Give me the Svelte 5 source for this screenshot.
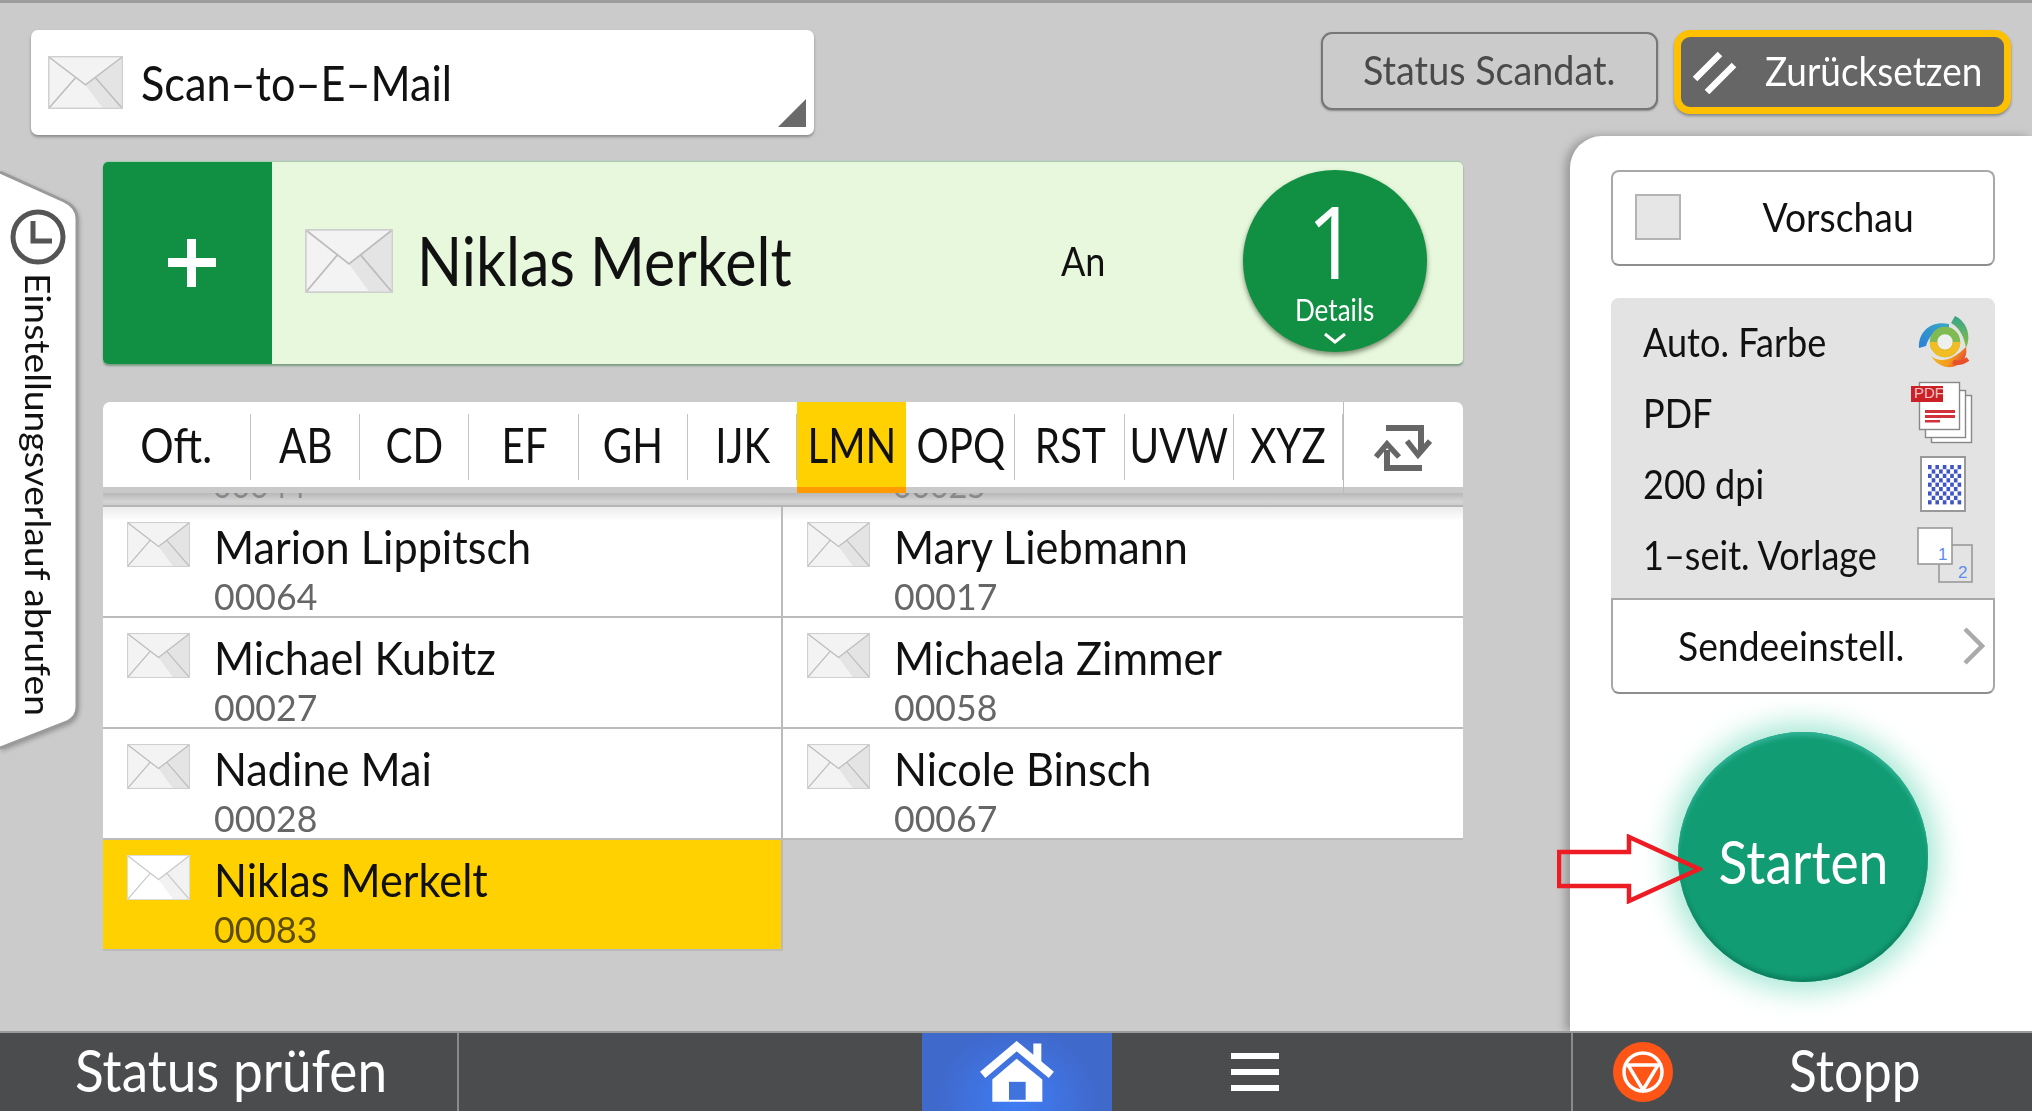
<script>
  const tabs = ["AB", "CD", "EF", "GH", "IJK", "LMN", "OPQ", "RST", "UVW", "XYZ"];
  const contacts = [
    { name: "Marion Lippitsch", id: "00064" },
    { name: "Mary Liebmann", id: "00017" },
    { name: "Michael Kubitz", id: "00027" },
    { name: "Michaela Zimmer", id: "00058" },
    { name: "Nadine Mai", id: "00028" },
    { name: "Nicole Binsch", id: "00067" },
    { name: "Niklas Merkelt", id: "00083", selected: true }
  ];
  const dots = [];
  for (let y = 0; y < 9; y++) {
    for (let x = 0; x < 9; x++) {
      if ((x + y) % 2 === 0) dots.push({ x: 8 + x * 3.7, y: 9 + y * 4.4 });
    }
  }
</script>

{#snippet envelope(cls)}
  <svg class={cls} viewBox="0 0 60 44" preserveAspectRatio="none">
    <rect x="0.5" y="0.5" width="59" height="43" fill="#f3f3f3" stroke="#cfcfcf" />
    <polygon points="30,24 44,43.5 59.5,43.5 59.5,1 " fill="#e4e4e4" />
    <path d="M1 1 L30 24 L59 1 M1 43 L22 18 M59 43 L38 18" fill="none" stroke="#bdbdbd" stroke-width="1.2" />
    <rect x="0.5" y="0.5" width="59" height="43" fill="none" stroke="#cfcfcf" />
  </svg>
{/snippet}

<div class="screen">
  <div class="top">
    <div class="selector">
      {@render envelope("envSelector")}
      <span class="cond selectorText">Scan–to–E–Mail</span>
      <div class="corner"></div>
    </div>
    <div class="topButtons">
      <button class="statusBtn"><span class="condC">Status Scandat.</span></button>
      <button class="resetBtn">
        <svg class="resetIcon" viewBox="0 0 44 44">
          <path d="M2 29 L27 4 M14 42 L41 15" stroke="#fff" stroke-width="6.5" fill="none" />
        </svg>
        <span class="cond resetText">Zurücksetzen</span>
      </button>
    </div>
  </div>

  <div class="main">
    <div class="left">
      <div class="destCard">
        <div class="plus"><div class="plusH"></div><div class="plusV"></div></div>
        {@render envelope("envLarge")}
        <span class="cond destName">Niklas Merkelt</span>
        <span class="cond destAn">An</span>
        <div class="count">
          <span class="countNum">1</span>
          <span class="condC countLabel">Details</span>
          <svg class="countChevron" viewBox="0 0 24 13">
            <path d="M2 2 L12 10 L22 2" fill="none" stroke="#fff" stroke-width="3" />
          </svg>
        </div>
      </div>

      <div class="tabs">
        <div class="tab first"><span class="condC">Oft.</span></div>
        {#each tabs as t}
          <div class="tab" class:active={t === "LMN"}><span class="condC">{t}</span></div>
        {/each}
        <div class="tab swap">
          <svg class="swapIcon" viewBox="0 0 58 48">
            <path d="M12 4 H47 V28" fill="none" stroke="#666" stroke-width="6" />
            <path d="M33 17 L44 31 L56 17" fill="none" stroke="#666" stroke-width="5.5" />
            <path d="M13 26 V44 H48" fill="none" stroke="#666" stroke-width="6" />
            <path d="M2 33 L13 20 L25 33" fill="none" stroke="#666" stroke-width="5.5" />
          </svg>
        </div>
      </div>

      <div class="peek">
        <span class="peekNum">00044</span>
        <span class="peekNum">00025</span>
      </div>

      <div class="list">
        {#each contacts as c}
          <div class="row" class:selected={c.selected}>
            {@render envelope("envRow")}
            <div class="rowText">
              <span class="cond rowName">{c.name}</span>
              <span class="cond rowId">{c.id}</span>
            </div>
          </div>
        {/each}
      </div>
    </div>

    <div class="panel">
      <div class="preview">
        <div class="check"></div>
        <span class="condC previewText">Vorschau</span>
      </div>

      <div class="info">
        <div class="infoRow">
          <span class="cond">Auto. Farbe</span>
          <svg class="swirl" viewBox="0 0 52 53">
            <defs>
              <linearGradient id="swirlTop" x1="0" y1="1" x2="1" y2="0">
                <stop offset="0" stop-color="#2c7fd6" />
                <stop offset="1" stop-color="#39a9c4" />
              </linearGradient>
              <linearGradient id="swirlSide" x1="0" y1="0" x2="0" y2="1">
                <stop offset="0" stop-color="#35a48e" />
                <stop offset="1" stop-color="#8dbe3f" />
              </linearGradient>
              <linearGradient id="swirlLow" x1="0" y1="0" x2="1" y2="0.4">
                <stop offset="0" stop-color="#f3c321" />
                <stop offset="0.7" stop-color="#f29a1f" />
                <stop offset="1" stop-color="#e8502c" />
              </linearGradient>
            </defs>
            <path d="M1 33 C0 16 14 5 31 9 L31 14 C20 12 11 20 8 31 Z" fill="url(#swirlTop)" />
            <path d="M37 1 C48 6 54 20 48 33 C46 22 42 13 33 8 Z" fill="url(#swirlSide)" />
            <circle cx="27" cy="27" r="11.5" fill="#eef0ee" stroke="#7fbb52" stroke-width="7.5" />
            <path d="M15.5 27 A11.5 11.5 0 0 0 38.5 27" fill="none" stroke="#f1bd22" stroke-width="7.5" />
            <path d="M13 41 C22 48 34 46 48 32 C50 42 44 50 34 52 C26 53 18 49 13 41 Z" fill="url(#swirlLow)" />
            <path d="M35 47 C41 49 46 47 50 44" fill="none" stroke="#e8502c" stroke-width="4.5" />
          </svg>
        </div>
        <div class="infoRow">
          <span class="cond">PDF</span>
          <svg class="pdf" viewBox="0 0 62 63">
            <rect x="20.5" y="14.5" width="40" height="47" fill="#fff" stroke="#888" stroke-width="1.4" />
            <rect x="14.5" y="9.5" width="40" height="47" fill="#fff" stroke="#888" stroke-width="1.4" />
            <rect x="8.5" y="1.5" width="40" height="47" fill="#fff" stroke="#888" stroke-width="1.4" />
            <rect x="0" y="5" width="32" height="16" fill="#cb2026" />
            <text x="3" y="17" class="pdfLabel">PDF</text>
            <rect x="14" y="29" width="30" height="3" fill="#d2333a" />
            <rect x="14" y="34" width="30" height="3" fill="#d2333a" />
            <rect x="14" y="39" width="15" height="2.5" fill="#d2333a" />
          </svg>
        </div>
        <div class="infoRow">
          <span class="cond">200 dpi</span>
          <svg class="dpi" viewBox="0 0 46 56">
            <rect x="1" y="1" width="44" height="54" fill="#fff" stroke="#999" stroke-width="2" />
            {#each dots as d}
              <rect x={d.x} y={d.y} width="3.6" height="4.2" fill="#3f55c4" />
            {/each}
          </svg>
        </div>
        <div class="infoRow">
          <span class="cond">1–seit. Vorlage</span>
          <svg class="sides" viewBox="0 0 56 56">
            <rect x="22" y="18" width="33" height="37" fill="#e4e4e4" stroke="#999" stroke-width="1.6" />
            <rect x="1" y="1" width="34" height="36" fill="#fff" stroke="#999" stroke-width="1.6" />
            <text x="21" y="33" class="sideNum">1</text>
            <text x="41" y="51" class="sideNum">2</text>
          </svg>
        </div>
      </div>

      <div class="send">
        <span class="cond sendText">Sendeeinstell.</span>
        <svg class="sendChevron" viewBox="0 0 22 38">
          <path d="M2 2 L19 19 L2 36" fill="none" stroke="#aaa" stroke-width="4.5" />
        </svg>
      </div>

      <button class="start"><span class="condC startText">Starten</span></button>
    </div>
  </div>

  <div class="bottom">
    <div class="statusCheck"><span class="cond">Status prüfen</span></div>
    <div class="homeSpacer"></div>
    <div class="home">
      <svg class="homeIcon" viewBox="385 123 228 185">
        <rect x="548" y="130" width="24" height="62" fill="#fff" />
        <path d="M396 224 L498 138 L602 224" fill="none" stroke="#fff" stroke-width="24" />
        <path d="M425 238 L498 176 L575 238 V305 H425 Z" fill="#fff" />
        <rect x="475" y="245" width="50" height="54" fill="#4173de" />
      </svg>
    </div>
    <div class="menu"><span></span><span></span><span></span></div>
    <div class="stop">
      <svg class="stopIcon" viewBox="0 0 60 60">
        <circle cx="30" cy="30" r="30" fill="#ff5517" />
        <circle cx="30" cy="30" r="19" fill="none" stroke="#fff" stroke-width="3.5" />
        <path d="M15 23 H45 L30 48 Z" fill="none" stroke="#fff" stroke-width="3.5" />
      </svg>
      <span class="cond stopText">Stopp</span>
    </div>
  </div>

  <!-- side tab and the red annotation sit over the page -->
  <div class="historyTab">
    <svg class="historyShape" viewBox="0 0 84 590">
      <path d="M0 1 L64 30 Q77 36 77 48 V536 Q77 546 67 551 L0 577 Z" fill="#fff" />
      <path d="M0 1 L64 30 Q77 36 77 48 V536 Q77 546 67 551 L0 577" fill="none" stroke="#9a9a9a" stroke-width="3" />
    </svg>
    <svg class="clock" viewBox="0 0 56 56">
      <circle cx="28" cy="28" r="25" fill="none" stroke="#555" stroke-width="5" />
      <path d="M23 12 V32 H42" fill="none" stroke="#555" stroke-width="5" />
    </svg>
    <span class="historyText">Einstellungsverlauf abrufen</span>
  </div>

  <svg class="arrow" viewBox="0 0 146 70">
    <path d="M2 18 H72 V3 L142 35 L72 67 V52 H2 Z" fill="none" stroke="#ed1c24" stroke-width="4.5" />
  </svg>
</div>

<style>
  :global(body) {
    margin: 0;
    background: #cbcbcb;
  }
  .screen {
    position: relative;
    width: 2032px;
    height: 1111px;
    background: #cbcbcb;
    border-top: 3px solid #9d9d9d;
    box-sizing: border-box;
    overflow: hidden;
    font-family: Lato, "Liberation Sans", sans-serif;
    color: #111;
    display: flex;
    flex-direction: column;
  }
  button {
    font-family: inherit;
    padding: 0;
  }
  .cond {
    display: inline-block;
    white-space: nowrap;
    transform: scaleX(var(--sx, 0.88));
    transform-origin: left center;
  }
  .condC {
    display: inline-block;
    white-space: nowrap;
    transform: scaleX(var(--sx, 0.88));
    transform-origin: center;
  }

  .top {
    display: flex;
    justify-content: space-between;
    height: 106px;
    margin-top: 27px;
    padding: 0 21px 0 31px;
    flex-shrink: 0;
  }
  .selector {
    position: relative;
    width: 783px;
    height: 105px;
    background: #fff;
    border-radius: 7px;
    box-shadow: 0 2px 3px #8a8a8a;
    display: flex;
    align-items: center;
    padding-left: 17px;
    box-sizing: border-box;
  }
  .envSelector {
    width: 75px;
    height: 53px;
  }
  .selectorText {
    margin-left: 18px;
    font-size: 48px;
    --sx: 0.9;
  }
  .corner {
    position: absolute;
    right: 8px;
    bottom: 8px;
    width: 0;
    height: 0;
    border-left: 28px solid transparent;
    border-bottom: 28px solid #6a6a6a;
  }
  .topButtons {
    display: flex;
    gap: 16px;
    height: 84px;
  }
  .statusBtn {
    width: 337px;
    height: 78px;
    margin-top: 2px;
    padding-bottom: 4px;
    background: #cbcbcb;
    border: 2px solid #777;
    border-radius: 11px;
    box-shadow: 0 1px 2px #888;
    color: #4a4a4a;
    font-size: 41px;
    --sx: 0.92;
  }
  .resetBtn {
    width: 337px;
    height: 84px;
    background: #666;
    border: 7px solid #ffc000;
    border-radius: 16px;
    box-shadow: 0 2px 3px #888;
    color: #fff;
    display: flex;
    align-items: center;
    padding-left: 12px;
    padding-bottom: 4px;
    box-sizing: border-box;
  }
  .resetIcon {
    width: 44px;
    height: 44px;
    flex-shrink: 0;
    margin-top: 4px;
  }
  .resetText {
    font-size: 41px;
    margin-left: 28px;
    --sx: 0.9;
  }

  .main {
    display: flex;
    flex: 1;
    min-height: 0;
  }
  .left {
    width: 1570px;
    padding: 26px 0 0 103px;
    box-sizing: border-box;
  }
  .destCard {
    position: relative;
    width: 1360px;
    height: 202px;
    background: #e7f8dd;
    border-radius: 5px;
    box-shadow: 0 2px 2px #7d9c85, 0 -1px 1px #a5cdb1;
    display: flex;
    align-items: center;
    overflow: visible;
  }
  .plus {
    position: relative;
    width: 169px;
    height: 202px;
    background: #118f43;
    border-radius: 5px 0 0 5px;
    flex-shrink: 0;
  }
  .plusH {
    position: absolute;
    left: 65px;
    top: 96px;
    width: 48px;
    height: 9px;
    background: #fff;
  }
  .plusV {
    position: absolute;
    left: 84px;
    top: 77px;
    width: 9px;
    height: 48px;
    background: #fff;
  }
  .envLarge {
    width: 88px;
    height: 64px;
    margin-left: 33px;
    margin-bottom: 4px;
    flex-shrink: 0;
  }
  .destName {
    margin-left: 24px;
    margin-bottom: 8px;
    font-size: 68px;
    width: 644px;
    --sx: 0.87;
  }
  .destAn {
    font-size: 41px;
    margin-bottom: 5px;
    --sx: 0.88;
  }
  .count {
    position: absolute;
    left: 1140px;
    top: 8px;
    width: 184px;
    height: 182px;
    border-radius: 50%;
    background: #118f43;
    box-shadow: 0 3px 5px #7d8d70;
    color: #fff;
    display: flex;
    flex-direction: column;
    align-items: center;
  }
  .countNum {
    font-family: "Open Sans", sans-serif;
    font-size: 100px;
    line-height: 80px;
    margin-top: 30px;
    transform: translateX(-2px) scaleX(0.9);
  }
  .countLabel {
    font-size: 30px;
    line-height: 36px;
    margin-top: 11px;
    --sx: 0.87;
  }
  .countChevron {
    width: 24px;
    height: 13px;
    margin-top: 5px;
  }

  .tabs {
    position: relative;
    z-index: 2;
    display: flex;
    width: 1360px;
    height: 91px;
    margin-top: 38px;
    background: #fff;
    border-radius: 7px 7px 0 0;
    box-shadow: inset 0 -6px 0 #c9c9c9;
  }
  .tab {
    position: relative;
    width: 109.2px;
    height: 85px;
    display: flex;
    align-items: center;
    justify-content: center;
    font-size: 48px;
    --sx: 0.84;
  }
  .tab::after {
    content: "";
    position: absolute;
    right: 0;
    top: 12px;
    height: 66px;
    width: 1px;
    background: #c4c4c4;
  }
  .first {
    width: 148px;
    padding-right: 2px;
    box-sizing: border-box;
    --sx: 0.87;
  }
  .active {
    background: #ffd100;
    box-shadow: 0 6px 0 #ff9a00;
  }
  .active::after {
    display: none;
  }
  .swap {
    width: 120px;
    height: 91px;
    border-left: 1px solid #bbb;
    box-sizing: border-box;
  }
  .swap::after {
    display: none;
  }
  .swapIcon {
    width: 58px;
    height: 48px;
  }
  .peek {
    display: flex;
    width: 1360px;
    height: 14px;
    overflow: hidden;
    background: linear-gradient(#b8b8b8, #d4d4d4 70%, #cdcdcd);
    border-bottom: 2px solid #b5b5b5;
    box-sizing: border-box;
  }
  .peekNum {
    width: 570px;
    margin-left: 110px;
    font-size: 32px;
    line-height: 16px;
    color: #888;
    transform-origin: left;
    margin-top: -15px;
  }
  .list {
    display: grid;
    grid-template-columns: 680px 680px;
    grid-auto-rows: 111px;
    width: 1360px;
  }
  .row {
    position: relative;
    background: #fff;
    border-bottom: 2px solid #bbb;
    box-sizing: border-box;
    display: flex;
  }
  .row:nth-child(odd) {
    border-right: 2px solid #bbb;
  }
  .row:nth-child(-n + 2) {
    background: linear-gradient(#ececec, #fff 14px);
  }
  .selected {
    background: #ffd100;
  }
  .selected .envRow {
    filter: brightness(1.06);
  }
  .envRow {
    width: 63px;
    height: 45px;
    margin: 15px 0 0 24px;
    flex-shrink: 0;
  }
  .rowText {
    display: flex;
    flex-direction: column;
    align-items: flex-start;
    margin-left: 24px;
  }
  .rowName {
    font-size: 47px;
    line-height: 52px;
    margin-top: 13px;
    --sx: 0.92;
  }
  .rowId {
    font-size: 36px;
    line-height: 34px;
    color: #666;
    margin-top: 7px;
    --sx: 0.99;
  }
  .selected .rowId {
    color: #5c4c00;
  }

  .panel {
    width: 462px;
    background: #fff;
    border-radius: 32px 0 0 0;
    box-shadow: -5px 0 8px #9a9a9a;
    padding: 34px 37px 0 41px;
    box-sizing: border-box;
    display: flex;
    flex-direction: column;
    align-items: stretch;
  }
  .preview {
    position: relative;
    height: 96px;
    border: 2px solid #a8a8a8;
    border-bottom-color: #8e8e8e;
    border-radius: 8px;
    box-sizing: border-box;
    display: flex;
    align-items: center;
    justify-content: center;
    padding-left: 70px;
    padding-bottom: 4px;
  }
  .check {
    position: absolute;
    left: 22px;
    top: 22px;
    width: 46px;
    height: 46px;
    background: #e6e6e6;
    border: 2px solid #b4b4b4;
    box-sizing: border-box;
  }
  .previewText {
    font-size: 41px;
    --sx: 0.91;
  }
  .info {
    height: 300px;
    margin-top: 32px;
    padding: 8px 22px 0 32px;
    box-sizing: border-box;
    background: #e3e3e3;
    border-radius: 8px 8px 0 0;
    font-size: 41px;
    display: flex;
    flex-direction: column;
  }
  .infoRow {
    height: 71px;
    display: flex;
    align-items: center;
    justify-content: space-between;
  }
  .swirl {
    width: 52px;
    height: 53px;
    margin-right: 3px;
  }
  .pdf {
    width: 62px;
    height: 63px;
  }
  .pdfLabel {
    font-family: "Liberation Sans", sans-serif;
    font-size: 15px;
    fill: #f3c6c6;
  }
  .dpi {
    width: 46px;
    height: 56px;
    margin-right: 7px;
  }
  .sides {
    width: 56px;
    height: 56px;
  }
  .sideNum {
    font-family: "Liberation Sans", sans-serif;
    font-size: 17px;
    fill: #5b8def;
  }
  .send {
    position: relative;
    height: 96px;
    border: 2px solid #a8a8a8;
    border-bottom-color: #8e8e8e;
    border-radius: 0 0 8px 8px;
    box-sizing: border-box;
    display: flex;
    align-items: center;
    padding-left: 65px;
    padding-bottom: 2px;
  }
  .sendText {
    font-size: 41px;
    --sx: 0.91;
  }
  .sendChevron {
    position: absolute;
    right: 8px;
    top: 27px;
    width: 22px;
    height: 38px;
  }
  .start {
    align-self: center;
    width: 250px;
    height: 250px;
    margin-top: 38px;
    padding-top: 8px;
    border: none;
    border-radius: 50%;
    background: #129c73;
    box-shadow: 0 0 28px 9px #a6e8d4, inset 0 4px 4px #2fb195, inset 0 -4px 4px #0d8060;
    color: #fff;
    flex-shrink: 0;
  }
  .startText {
    font-size: 60px;
    --sx: 0.89;
  }

  .bottom {
    height: 80px;
    flex-shrink: 0;
    background: #4b4c4e;
    border-top: 2px solid #9a9a9a;
    box-sizing: border-box;
    display: flex;
    color: #fff;
    font-size: 59px;
    align-items: stretch;
  }
  .statusCheck {
    width: 459px;
    padding-left: 75px;
    padding-bottom: 5px;
    box-sizing: border-box;
    border-right: 2px solid #8a8a8a;
    display: flex;
    align-items: center;
    --sx: 0.9;
  }
  .homeSpacer {
    width: 463px;
  }
  .home {
    width: 190px;
    background: radial-gradient(ellipse 80px 70px at 50% 85%, #3f7df5, #4069cc);
    display: flex;
    align-items: center;
    justify-content: center;
  }
  .homeIcon {
    width: 76px;
    height: 62px;
  }
  .menu {
    width: 461px;
    display: flex;
    flex-direction: column;
    gap: 10px;
    justify-content: center;
    align-items: flex-start;
    padding-left: 119px;
    box-sizing: border-box;
    border-right: 2px solid #8a8a8a;
  }
  .menu span {
    width: 48px;
    height: 6px;
    background: #fff;
  }
  .stop {
    flex: 1;
    display: flex;
    align-items: center;
    padding-left: 40px;
  }
  .stopIcon {
    width: 60px;
    height: 60px;
    flex-shrink: 0;
  }
  .stopText {
    margin-left: 116px;
    margin-bottom: 5px;
    --sx: 0.87;
  }

  .historyTab {
    position: absolute;
    left: 0;
    top: 168px;
    width: 84px;
    height: 590px;
    z-index: 3;
    filter: drop-shadow(1px 2px 2px #999);
  }
  .historyShape {
    position: absolute;
    left: 0;
    top: 0;
    width: 84px;
    height: 590px;
  }
  .clock {
    position: absolute;
    left: 10px;
    top: 38px;
    width: 56px;
    height: 56px;
  }
  .historyText {
    position: absolute;
    left: 16px;
    top: 102px;
    writing-mode: vertical-rl;
    white-space: nowrap;
    font-size: 38px;
    line-height: 44px;
    transform: scale(0.9, 0.98);
    transform-origin: top;
  }
  .arrow {
    position: absolute;
    left: 1557px;
    top: 831px;
    width: 146px;
    height: 70px;
    z-index: 3;
  }
</style>
